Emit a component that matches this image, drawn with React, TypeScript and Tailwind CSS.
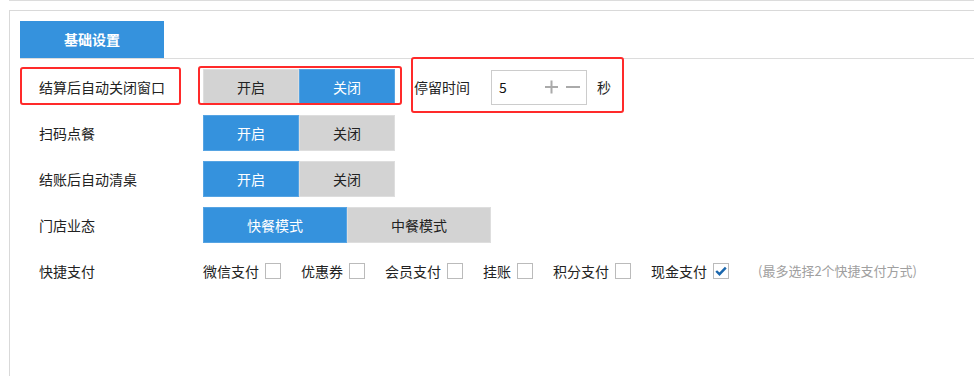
import React from "react";

const font = { fontFamily: '"Noto Sans CJK SC", "Noto Sans", sans-serif' };

function Seg({ options, active, w }: { options: string[]; active: number; w: string }) {
  return (
    <div className="flex h-[36px]">
      {options.map((o, i) => (
        <div
          key={o}
          className={
            (i === active
              ? "bg-[#3592dd] text-white border-[#56a4e3] "
              : "bg-[#d3d3d3] text-[#222] border-[#dedede] ") +
            w +
            " h-full border flex items-center justify-center text-[14px]"
          }
        >
          {o}
        </div>
      ))}
    </div>
  );
}

function Check({ label, checked }: { label: string; checked?: boolean }) {
  return (
    <div className="flex items-center">
      <span className="text-[14px] text-[#222]">{label}</span>
      <span className="ml-[6px] w-[16px] h-[16px] border border-[#bbbbbb] bg-white flex items-center justify-center">
        {checked && (
          <svg width="12" height="10" viewBox="0 0 12 10">
            <path d="M1.2 5 L4.5 8.2 L10.8 1.6" fill="none" stroke="#1b67ad" strokeWidth="2.4" />
          </svg>
        )}
      </span>
    </div>
  );
}

function Row({ label, children }: { label: string; children?: React.ReactNode }) {
  return (
    <div className="relative flex items-center h-[36px]">
      <div className="w-[183px] pl-[19px] text-[14px] text-[#222]">{label}</div>
      {children}
    </div>
  );
}

export default function App() {
  return (
    <div className="w-[974px] h-[376px] overflow-hidden bg-white" style={font}>
      <div className="ml-[9px] h-[1px] bg-[#dcdcdc]" />
      <div className="mt-[9px] ml-[9px] w-[1000px] h-[400px] border-l border-t border-[#d9d9d9] pt-[10px] pl-[10px]">
        <div className="border-b border-[#dcdcdc]">
          <div className="w-[144px] h-[37px] bg-[#3592dd] text-white font-bold text-[14px] flex items-center justify-center">
            基础设置
          </div>
        </div>
        <div className="mt-[10px] flex flex-col gap-[10px]">
          <div className="relative flex items-center h-[36px]">
            <div className="w-[183px] pl-[19px] text-[14px] text-[#222]">结算后自动关闭窗口</div>
            <Seg options={["开启", "关闭"]} active={1} w="w-[96px]" />
            <span className="ml-[19px] text-[14px] text-[#222]">停留时间</span>
            <div className="ml-[21px] w-[96px] h-[35px] border border-[#cccccc] flex items-center pl-[7px]">
              <span className="text-[14px] text-[#111] flex-1">5</span>
              <svg width="36" height="14" viewBox="0 0 36 14" className="mr-[5px]">
                <path d="M0 7 H13 M6.5 0.5 V13.5" stroke="#aaaaaa" strokeWidth="2" />
                <path d="M21 7 H35" stroke="#aaaaaa" strokeWidth="2" />
              </svg>
            </div>
            <span className="ml-[10px] text-[14px] text-[#222]">秒</span>
            <div className="absolute left-0 top-[-2px] w-[161px] h-[38px] border-[2.5px] border-[#ff2a2a] rounded-[3px]" />
            <div className="absolute left-[178px] top-[-3px] w-[204px] h-[39px] border-[2.5px] border-[#ff2a2a] rounded-[3px]" />
            <div className="absolute left-[391px] top-[-12px] w-[213px] h-[56px] border-[2.5px] border-[#ff2a2a] rounded-[3px]" />
          </div>
          <Row label="扫码点餐">
            <Seg options={["开启", "关闭"]} active={0} w="w-[96px]" />
          </Row>
          <Row label="结账后自动清桌">
            <Seg options={["开启", "关闭"]} active={0} w="w-[96px]" />
          </Row>
          <Row label="门店业态">
            <Seg options={["快餐模式", "中餐模式"]} active={0} w="w-[144px]" />
          </Row>
          <Row label="快捷支付">
            <div className="flex items-center gap-[20px]">
              <Check label="微信支付" />
              <Check label="优惠券" />
              <Check label="会员支付" />
              <Check label="挂账" />
              <Check label="积分支付" />
              <Check label="现金支付" checked />
            </div>
            <span className="ml-[29px] text-[13px] text-[#a0a0a0]">(最多选择2个快捷支付方式)</span>
          </Row>
        </div>
      </div>
    </div>
  );
}
